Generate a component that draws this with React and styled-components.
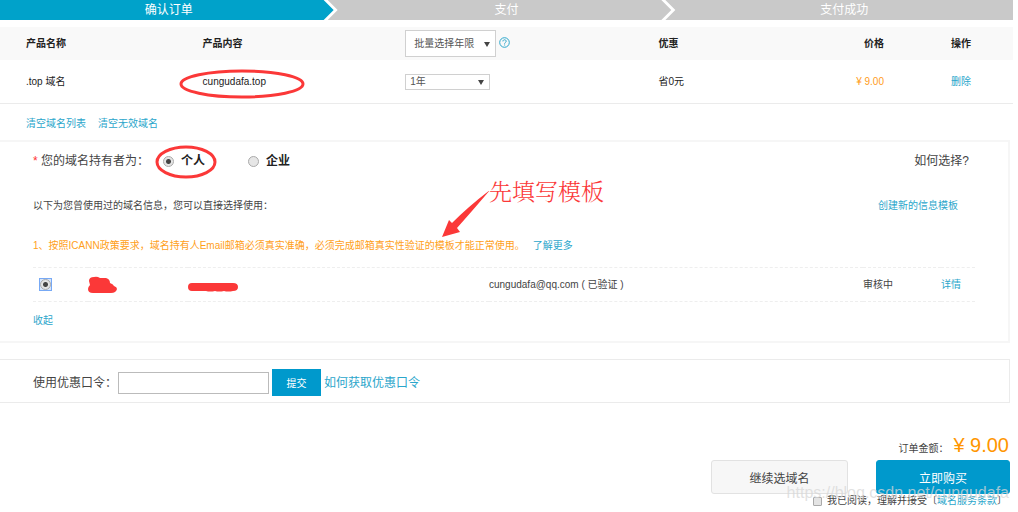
import React, { useState } from "react";
import styled, { createGlobalStyle } from "styled-components";

const GlobalStyle = createGlobalStyle`
  :root {
    --blue: #00a2ca;
    --button-blue: #0099cc;
    --link: #2ba6cb;
    --orange: #ff9c1a;
    --red: #fb3838;
    --text: #444;
    --line: #ebebeb;
  }

  * {
    box-sizing: border-box;
  }

  body {
    margin: 0;
    background: #fff;
    color: var(--text);
    font: 10px/14px "Liberation Sans", "Noto Sans CJK SC", sans-serif;
  }

  button, input, select {
    font-family: inherit;
    margin: 0;
  }
`;

const Steps = styled.ol`
  display: grid;
  grid-template-columns: repeat(3, 1fr);
  list-style: none;
  margin: 0 5px 7px 0;
  padding: 0;
`;

const Step = styled.li`
  background: ${props => (props.$active ? "var(--blue)" : "#c9c9c9")};
  color: #fff;
  font-size: 12px;
  line-height: 20px;
  text-align: center;
  margin-left: ${props => (props.$first ? "0" : "-10px")};
  padding-left: ${props => (props.$first ? "0" : "10px")};
  clip-path: polygon(
    0 0,
    ${props => (props.$last ? "100%" : "calc(100% - 14px)")} 0,
    ${props => (props.$last ? "100%" : "calc(100% - 4px)")} 50%,
    ${props => (props.$last ? "100%" : "calc(100% - 14px)")} 100%,
    0 100%,
    ${props => (props.$first ? "0" : "10px")} 50%
  );
`;

const OrderArea = styled.div`
  position: relative;
  margin-right: 5px;
`;

const OrderTable = styled.table`
  width: 100%;
  table-layout: fixed;
  border-collapse: separate;
  border-spacing: 0;
  color: #222;

  th, td {
    padding: 0;
    text-align: left;
    vertical-align: middle;
  }

  th {
    height: 33px;
    background: #f9f9f9;
  }

  td {
    height: 44px;
    border-bottom: 1px solid var(--line);
  }

  th:first-child, td:first-child {
    padding-left: 26px;
  }

  th:nth-child(5), td:nth-child(5) {
    text-align: right;
  }

  th:last-child, td:last-child {
    padding-left: 67px;
  }
`;

const Col = styled.col`
  width: ${props => props.$width};
`;

const SelectBox = styled.span`
  position: relative;
  display: inline-block;
  vertical-align: middle;

  &::after {
    content: "";
    position: absolute;
    top: 50%;
    right: 6px;
    margin-top: -2px;
    border: 3px solid transparent;
    border-top: 5px solid #444;
    border-bottom: 0;
    pointer-events: none;
  }
`;

const Select = styled.select`
  appearance: none;
  display: block;
  width: ${props => (props.$large ? "91px" : "85px")};
  height: ${props => (props.$large ? "27px" : "16px")};
  padding: 0 0 0 ${props => (props.$large ? "8px" : "4px")};
  border: 1px solid #d0d0d0;
  border-radius: 0;
  background: #fff;
  color: #555;
  font-size: 10px;
`;

const HelpIcon = styled.svg`
  width: 11px;
  height: 11px;
  margin: 0 0 2px 3px;
  vertical-align: middle;
`;

const Link = styled.a`
  color: ${props => (props.$plain ? "var(--text)" : "var(--link)")};
  text-decoration: none;
`;

const Price = styled.span`
  color: var(--orange);
`;

// hand drawn rings lie over the content they mark
const Ring = styled.svg`
  position: absolute;
  fill: none;
  stroke: var(--red);
  stroke-width: 3px;
  pointer-events: none;
`;

const DomainRing = styled(Ring)`
  top: 41px;
  left: calc(20% - 24px);
`;

const OwnerRing = styled(Ring)`
  top: 3px;
  left: 154px;
`;

const ClearLinks = styled.div`
  display: flex;
  gap: 12px;
  padding: 13px 26px 9px;
`;

const Panel = styled.section`
  position: relative;
  margin-right: 8px;
  padding: 11px 33px 13px;
  border: 2px solid #f6f6f6;
  border-left: 0;
`;

const Line = styled.div`
  display: flex;
  justify-content: space-between;
  align-items: center;
  padding-right: ${props => props.$right};
  margin-bottom: ${props => props.$gap};
`;

const OwnerTypes = styled.div`
  display: flex;
  align-items: center;
  gap: 14px;
  font-size: 12px;
  line-height: 16px;
`;

const Required = styled.span`
  display: inline-block;
  width: 8px;
  color: #f33;
`;

const OwnerOption = styled.label`
  display: inline-flex;
  align-items: center;
  gap: 7px;
  margin-right: 29px;
  color: #222;
  font-weight: bold;
`;

const Radio = styled.input`
  appearance: none;
  display: block;
  width: 11px;
  height: 11px;
  border: 1px solid #aaa;
  border-radius: 50%;
  background: #e6e6e6;

  &:checked {
    background: radial-gradient(circle, #444 0 2px, #e4e4e4 3px);
  }
`;

const FocusBox = styled.span`
  display: block;
  width: 13px;
  margin-left: 6px;
  border: 1px solid #77a9f5;
  background: #d5e4fb;
`;

const Notice = styled.p`
  display: flex;
  gap: 8px;
  margin: 0 0 14px;
  color: #ffa01a;
`;

const TemplateTable = styled.table`
  width: 100%;
  table-layout: fixed;
  border-collapse: separate;
  border-spacing: 0;
  margin-bottom: 12px;

  td {
    height: 35px;
    padding: 0;
    border: 1px dashed #eee;
    border-width: 1px 0;
  }
`;

const Scribble = styled.svg`
  display: block;
  fill: var(--red);
`;

const Callout = styled.div`
  position: absolute;
  top: 36px;
  left: 442px;
  display: flex;
  align-items: flex-start;
  color: var(--red);
  font: 300 23px/26px "Noto Serif CJK SC", "Noto Sans CJK SC", serif;
  white-space: nowrap;
  pointer-events: none;
`;

const Arrow = styled.svg`
  margin-top: 10px;
  fill: var(--red);
`;

const Coupon = styled.form`
  display: flex;
  align-items: center;
  gap: 3px;
  margin: 16px 8px 0 0;
  padding: 9px 33px 6px;
  border: 1px solid var(--line);
  border-left: 0;
  font-size: 12px;
`;

const CouponLabel = styled.label`
  width: 82px;
  white-space: nowrap;
`;

const CouponInput = styled.input`
  width: 151px;
  height: 22px;
  border: 1px solid #bbb;
  background: #fff;
`;

const Submit = styled.button`
  width: 49px;
  height: 27px;
  padding: 0;
  border: 0;
  background: var(--button-blue);
  color: #fff;
  font-size: 10px;
`;

const Footer = styled.footer`
  position: relative;
  display: flex;
  flex-direction: column;
  align-items: flex-end;
  padding: 30px 8px 4px 0;
`;

const Amount = styled.div`
  display: flex;
  align-items: baseline;
  gap: 5px;
  padding-right: 1px;
  margin-bottom: 3px;
`;

const Total = styled(Price)`
  color: #ff9600;
  font-size: 20px;
  line-height: 24px;
`;

const Actions = styled.div`
  display: flex;
  gap: 28px;
`;

const Button = styled.button`
  width: ${props => (props.$primary ? "134px" : "137px")};
  height: 34px;
  padding: 0;
  border: 1px solid ${props => (props.$primary ? "var(--button-blue)" : "#e2e2e2")};
  border-radius: 3px;
  background: ${props => (props.$primary ? "var(--button-blue)" : "#f7f7f7")};
  color: ${props => (props.$primary ? "#fff" : "#444")};
  font-size: 12px;
`;

const Agreement = styled.div`
  display: flex;
  align-items: center;
  gap: 5px;
  padding-right: 3px;
`;

const Checkbox = styled.input`
  appearance: none;
  width: 9px;
  height: 9px;
  border: 1px solid #aaa;
  border-radius: 1px;
  background: #e4e4e4;

  &:checked {
    background: #666;
  }
`;

const Watermark = styled.span`
  position: absolute;
  right: 9px;
  bottom: 10px;
  color: rgba(215, 215, 215, 0.75);
  font-size: 16px;
  line-height: 18px;
  pointer-events: none;
`;

const steps = ["确认订单", "支付", "支付成功"];

function OrderList() {
  return (
    <OrderArea>
      <OrderTable>
        <colgroup>
          <Col $width="20%" />
          <Col $width="20%" />
          <Col $width="25%" />
          <Col />
          <Col $width="10%" />
          <Col $width="129px" />
        </colgroup>
        <thead>
          <tr>
            <th>产品名称</th>
            <th>产品内容</th>
            <th>
              <SelectBox>
                <Select $large aria-label="批量选择年限">
                  <option>批量选择年限</option>
                </Select>
              </SelectBox>
              <HelpIcon viewBox="0 0 11 11" fill="none" stroke="#2ba6cb">
                <circle cx="5.5" cy="5.5" r="4.8" />
                <path d="M3.9 4.4c0-2.2 3.3-2.1 3.3-.1 0 1.2-1.6 1.1-1.6 2.4M5.6 7.5v1" />
              </HelpIcon>
            </th>
            <th>优惠</th>
            <th>价格</th>
            <th>操作</th>
          </tr>
        </thead>
        <tbody>
          <tr>
            <td>.top 域名</td>
            <td>cungudafa.top</td>
            <td>
              <SelectBox>
                <Select aria-label="年限">
                  <option>1年</option>
                </Select>
              </SelectBox>
            </td>
            <td>省0元</td>
            <td><Price>¥ 9.00</Price></td>
            <td><Link href="#">删除</Link></td>
          </tr>
        </tbody>
      </OrderTable>
      <ClearLinks>
        <Link href="#">清空域名列表</Link>
        <Link href="#">清空无效域名</Link>
      </ClearLinks>
      <DomainRing width="128" height="32">
        <ellipse cx="63" cy="16" rx="61" ry="13" />
      </DomainRing>
    </OrderArea>
  );
}

function OwnerPanel() {
  const [owner, setOwner] = useState("personal");

  return (
    <Panel>
      <Line $right="6px" $gap="30px">
        <OwnerTypes>
          <span><Required>*</Required>您的域名持有者为：</span>
          <OwnerOption>
            <Radio
              type="radio"
              name="owner"
              checked={owner === "personal"}
              onChange={() => setOwner("personal")}
            />
            个人
          </OwnerOption>
          <OwnerOption>
            <Radio
              type="radio"
              name="owner"
              checked={owner === "company"}
              onChange={() => setOwner("company")}
            />
            企业
          </OwnerOption>
        </OwnerTypes>
        <OwnerTypes><Link $plain href="#">如何选择?</Link></OwnerTypes>
      </Line>
      <Line $right="17px" $gap="26px">
        <span>以下为您曾使用过的域名信息，您可以直接选择使用：</span>
        <Link href="#">创建新的信息模板</Link>
      </Line>
      <Notice>
        <span>1、按照ICANN政策要求，域名持有人Email邮箱必须真实准确，必须完成邮箱真实性验证的模板才能正常使用。</span>
        <Link href="#">了解更多</Link>
      </Notice>
      <TemplateTable>
        <colgroup>
          <Col $width="55px" />
          <Col $width="100px" />
          <Col $width="301px" />
          <Col />
          <Col $width="78px" />
          <Col $width="34px" />
        </colgroup>
        <tbody>
          <tr>
            <td>
              <FocusBox>
                <Radio type="radio" name="template" aria-label="cungudafa@qq.com" defaultChecked />
              </FocusBox>
            </td>
            <td>
              <Scribble width="30" height="18">
                <path d="M1 5Q1 1 6 1q3-1 6 1h6q4 1 4 5 3 1 4 3 3 1 3 3-1 4-6 4H5q-5 0-5-4 0-2 2-4z" />
              </Scribble>
            </td>
            <td>
              <Scribble width="50" height="18">
                <path d="M4 7h41q5 0 5 4t-5 4q-5 1-9 0-5 1-9 0-5 1-9 0H4q-4 0-4-4t4-4z" />
              </Scribble>
            </td>
            <td>cungudafa@qq.com ( 已验证 )</td>
            <td>审核中</td>
            <td><Link href="#">详情</Link></td>
          </tr>
        </tbody>
      </TemplateTable>
      <Link href="#">收起</Link>
      <OwnerRing width="64" height="34">
        <ellipse cx="32" cy="17" rx="29" ry="15" />
      </OwnerRing>
      <Callout>
        <Arrow width="47" height="50" viewBox="0 0 47 50">
          <path d="M0 49 7 32l3 3Q27 18 48 2 31 22 15 40l3 4z" />
        </Arrow>
        <span>先填写模板</span>
      </Callout>
    </Panel>
  );
}

function App() {
  return (
    <main>
      <GlobalStyle />
      <Steps>
        {steps.map((step, i) => (
          <Step key={step} $active={i === 0} $first={i === 0} $last={i === steps.length - 1}>
            {step}
          </Step>
        ))}
      </Steps>
      <OrderList />
      <OwnerPanel />
      <Coupon onSubmit={event => event.preventDefault()}>
        <CouponLabel htmlFor="coupon">使用优惠口令：</CouponLabel>
        <CouponInput id="coupon" type="text" />
        <Submit type="submit">提交</Submit>
        <Link href="#">如何获取优惠口令</Link>
      </Coupon>
      <Footer>
        <Amount>
          <span>订单金额：</span>
          <Total>¥ 9.00</Total>
        </Amount>
        <Actions>
          <Button type="button">继续选域名</Button>
          <Button type="button" $primary>立即购买</Button>
        </Actions>
        <Agreement>
          <Checkbox id="agree" type="checkbox" />
          <label htmlFor="agree">
            我已阅读，理解并接受〔<Link href="#">域名服务条款</Link>〕
          </label>
        </Agreement>
        <Watermark>https://blog.csdn.net/cungudafa</Watermark>
      </Footer>
    </main>
  );
}

export default App;
